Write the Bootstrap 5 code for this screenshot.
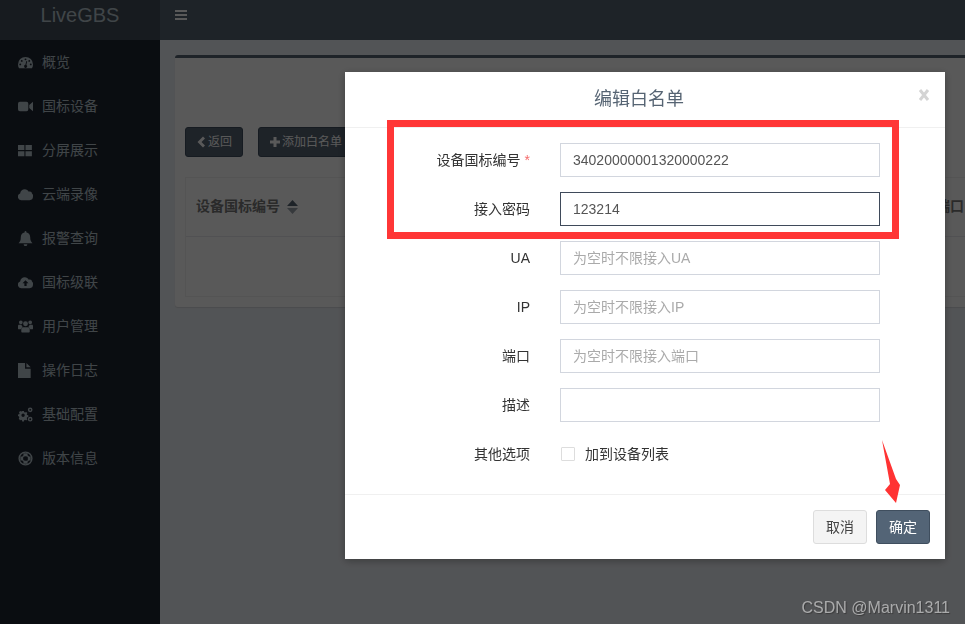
<!DOCTYPE html>
<html lang="zh"><head><meta charset="utf-8"><title>LiveGBS</title>
<link href="https://cdn.jsdelivr.net/npm/bootstrap@5.3.0/dist/css/bootstrap.min.css" rel="stylesheet">
<style>
html,body{height:100%;overflow:hidden}
body{font-family:"Liberation Sans","Noto Sans CJK SC",sans-serif;font-size:14px;background:#ecf0f5;color:#333}
.shell{height:624px}
.side{width:160px;flex:none;background:#1f2533;}
.logo{height:40px;background:#424e5b;color:#b8c7ce;font-size:20px;line-height:30px;text-align:center;}
.side-link{height:44px;padding-left:18px;color:#b8c7ce;gap:9px;text-decoration:none}
.side-link svg{width:15px;height:15px;flex:none;fill:currentColor}
.main-col{min-width:0;flex:1;overflow:hidden}
.topbar{height:40px;background:#566473;padding:8px 0 0 15px;color:#fff}
.topbar svg{width:12px;height:14px;fill:currentColor}
.panel{margin:15px 0 0 15px;width:900px;height:252px;background:#fff;border-top:3px solid #566473;border-radius:3px;padding:69px 10px 0 10px;box-shadow:0 1px 1px rgba(0,0,0,.1)}
.act{height:30px;background:#566473;border:1px solid #3f4e5e;color:#fff;font-size:12px;padding:0 10px;border-radius:3px;gap:2px;margin-right:15px}
.act-add{padding-left:11px}
.act svg{width:10px;height:12px;fill:currentColor}
.grid-box{margin-top:20px;border:1px solid #f0f0f0;height:120px;width:1000px}
.grid-head{height:59px;padding-bottom:1px;border-bottom:1px solid #e8e8ee;font-weight:700;color:#7a7a7a}
.cell-a{width:750px;padding-left:10px;gap:7px}
.sort-ico{width:11px;height:14px}
.dim{position:fixed;inset:0;background:rgba(0,0,0,.65);z-index:10}
.dlg{position:fixed;left:345px;top:72px;width:600px;height:487px;z-index:11;border:0;border-radius:0;background:#fff;box-shadow:0 2px 8px rgba(0,0,0,.3);color:#333}
.dlg .modal-header{height:56px;padding:0 15px;border-bottom:1px solid #f0f0f0;justify-content:center;position:relative}
.dlg-title{font-size:18px;color:#566473;font-weight:400;margin:0 12px 0 0}
.dlg-x{position:absolute;left:573px;top:16px;width:12px;height:14px;color:#d4d4d4}
.dlg .modal-body{padding:15px 0 0;flex:none;height:366px}
.frow{height:34px;margin-bottom:15px;gap:30px}
.flabel{width:185px;text-align:right;margin:0;color:#333}
.req{color:#f56c6c;margin-left:4px}
.finput{width:320px;height:34px;border:1px solid #d2d6de;border-radius:0;padding:6px 12px;font-size:14px;color:#555;font-family:inherit;box-shadow:none}
.finput::placeholder{color:#aaa}
.finput.on{border-color:#3f4a5a;box-shadow:none}
.chk{width:14px;height:14px;margin:0 10px 0 1px;border:1px solid #ddd;background:#fff;border-radius:1px;display:block;flex:none}
.chk-wrap{color:#333;margin:0}
.dlg .modal-footer{height:65px;padding:15px;border-top:1px solid #f0f0f0;gap:9px;flex-wrap:nowrap}
.dlg .modal-footer .btn{margin:0;width:54px;height:34px;padding:0;font-size:14px;border-radius:3px}
.btn-off{background:#f4f4f4;border:1px solid #ddd;color:#444}
.btn-ok{background:#536476;border:1px solid #3f4e5e;color:#fff}
.mark-rect{position:fixed;left:387px;top:120px;width:512px;height:119px;border:7px solid #ff3636;z-index:12}
.mark-arrow{position:fixed;left:875px;top:438px;width:30px;height:68px;z-index:12}
.stamp{position:fixed;right:15px;top:597px;color:#fff;opacity:.5;font-size:16px;line-height:22px;z-index:12;text-shadow:1px 1px 1px #222}
</style></head>
<body>
<div class="shell d-flex">
<aside class="side">
<div class="logo">LiveGBS</div>
<nav class="d-flex flex-column">
<a class="side-link d-flex align-items-center" href="#"><svg viewBox="0 0 16 16"><path fill-rule="evenodd" d="M8 2a8 8 0 0 0-8 8c0 1.500.4 2.900 1.100 4h13.800A8 8 0 0 0 16 10a8 8 0 0 0-8-8zM8 3.600a1 1 0 1 1 0 2 1 1 0 0 1 0-2zM4 5.300a1 1 0 1 1 0 2 1 1 0 0 1 0-2zM12 5.300a1 1 0 1 1 0 2 1 1 0 0 1 0-2zM2.400 9a1 1 0 1 1 0 2 1 1 0 0 1 0-2zM13.600 9a1 1 0 1 1 0 2 1 1 0 0 1 0-2zM8.900 6.500l.9.2-.9 4a1.600 1.600 0 1 1-1-.2z"/></svg>概览</a>
<a class="side-link d-flex align-items-center" href="#"><svg viewBox="0 0 16 16"><path d="M0 5a2 2 0 0 1 2-2h7a2 2 0 0 1 2 2v6a2 2 0 0 1-2 2H2a2 2 0 0 1-2-2zM12 6.500 16 3v10l-4-3.500z"/></svg>国标设备</a>
<a class="side-link d-flex align-items-center" href="#"><svg viewBox="0 0 16 16"><path d="M0 2h6.800v5.500H0zM8 2h6.800v5.500H8zM0 8.700h6.800v5.500H0zM8 8.700h6.800v5.500H8z"/></svg>分屏展示</a>
<a class="side-link d-flex align-items-center" href="#"><svg viewBox="0 0 16 16"><path d="M3.600 14A3.600 3.600 0 0 1 2.300 7C2.500 4.500 4.600 2.500 7.200 2.500c1.900 0 3.500 1 4.300 2.600 .4-.2.800-.3 1.200-.3 1.200 0 2.100.9 2.200 2A3.700 3.700 0 0 1 16 10.200 3.800 3.800 0 0 1 12.300 14z"/></svg>云端录像</a>
<a class="side-link d-flex align-items-center" href="#"><svg viewBox="0 0 16 16"><path d="M8 0a1 1 0 0 1 1 1v.6c2.500.4 4 2.400 4 4.900 0 3.500.8 5 2.400 6.500H.6C2.200 11.500 3 10 3 6.500 3 4 4.500 2 7 1.600V1a1 1 0 0 1 1-1zM6 14h4a2 2 0 0 1-4 0z"/></svg>报警查询</a>
<a class="side-link d-flex align-items-center" href="#"><svg viewBox="0 0 16 16"><path fill-rule="evenodd" d="M3.600 14A3.600 3.600 0 0 1 2.300 7C2.500 4.500 4.600 2.500 7.200 2.500c1.900 0 3.500 1 4.300 2.600 .4-.2.800-.3 1.200-.3 1.200 0 2.100.9 2.200 2A3.700 3.700 0 0 1 16 10.200 3.800 3.800 0 0 1 12.300 14zM8 5.500 4.800 8.800h2v3h2.400v-3h2z"/></svg>国标级联</a>
<a class="side-link d-flex align-items-center" href="#"><svg viewBox="0 0 16 16"><path d="M3 1.500a2 2 0 1 1 0 4 2 2 0 0 1 0-4zM13 1.500a2 2 0 1 1 0 4 2 2 0 0 1 0-4zM8 2.500a2.600 2.600 0 1 1 0 5.200 2.600 2.600 0 0 1 0-5.200zM0 7.500c0-.8.600-1.300 1.200-1.300h2.500c.1 1 .6 1.900 1.400 2.400-1 .4-1.900 1.300-2.100 2.400H1C.4 11 0 10.500 0 10zM16 7.500c0-.8-.6-1.300-1.200-1.300h-2.500c-.1 1-.6 1.900-1.400 2.400 1 .4 1.900 1.300 2.100 2.400H15c.6 0 1-.5 1-1zM5.500 8.800h5c1.200 0 2 .9 2 2.100v2.300c0 .6-.5 1.100-1.100 1.100H4.600c-.6 0-1.100-.5-1.100-1.100v-2.300c0-1.200.8-2.100 2-2.100z"/></svg>用户管理</a>
<a class="side-link d-flex align-items-center" href="#"><svg viewBox="0 0 16 16"><path d="M0 0h7.500v6H13.500v10H0zM9 0l4.500 4.500H9z"/></svg>操作日志</a>
<a class="side-link d-flex align-items-center" href="#"><svg viewBox="0 0 16 16"><path fill-rule="evenodd" d="M4.500 4.200h1.800l.3 1.300 1 .4 1.100-.7 1.300 1.300-.7 1.100.4 1 1.300.3v1.800l-1.300.3-.4 1 .7 1.100-1.300 1.300-1.100-.7-1 .4-.3 1.300H4.500l-.3-1.300-1-.4-1.100.7L.8 12.100l.7-1.100-.4-1L0 9.700V7.900l1.300-.3.4-1-.7-1.100 1.300-1.300 1.100.7 1-.4zM5.400 7a1.800 1.800 0 1 0 0 3.600 1.800 1.800 0 0 0 0-3.600zM13 .5a2.500 2.500 0 1 1 0 5 2.500 2.500 0 0 1 0-5zM13 2a1 1 0 1 0 0 2 1 1 0 0 0 0-2zM13 10.500a2.500 2.500 0 1 1 0 5 2.500 2.500 0 0 1 0-5zM13 12a1 1 0 1 0 0 2 1 1 0 0 0 0-2z"/></svg>基础配置</a>
<a class="side-link d-flex align-items-center" href="#"><svg viewBox="0 0 16 16"><circle cx="8" cy="8" r="6.800" fill="none" stroke="currentColor" stroke-width="1.500"/><circle cx="8" cy="8" r="3.400" fill="none" stroke="currentColor" stroke-width="1.200"/><path d="M5.500 2.500h5l-.8 3H6.300zM5.500 13.500h5l-.8-3H6.300zM2.500 5.500v5l3-.8V6.300zM13.500 5.500v5l-3-.8V6.300z"/></svg>版本信息</a>
</nav>
</aside>
<div class="main-col">
<div class="topbar"><svg class="d-block" viewBox="0 0 12 14"><path d="M0 2h12v2H0zM0 6h12v2H0zM0 10h12v2H0z"/></svg></div>
<section class="panel">
<div class="d-flex">
<button class="act d-inline-flex align-items-center" type="button"><svg viewBox="0 0 10 12"><path d="M7 .5 9 2.500 5.500 6 9 9.500 7 11.500 1.500 6z"/></svg>返回</button>
<button class="act act-add d-inline-flex align-items-center" type="button"><svg viewBox="0 0 10 12"><path d="M3.500 1h3v3.500H10v3H6.500V11h-3V7.500H0v-3h3.500z"/></svg>添加白名单</button>
</div>
<div class="grid-box">
<div class="grid-head d-flex align-items-center">
<div class="cell-a d-flex align-items-center">设备国标编号 <svg class="sort-ico" viewBox="0 0 11 14"><path fill="#566473" d="M5.500 0 11 6H0z"/><path fill="#9aa3ad" d="M5.500 14 0 8h11z"/></svg></div>
<div>端口</div>
</div>
</div>
</section>
</div>
</div>

<div class="dim"></div>
<div class="modal-content dlg">
<div class="modal-header">
<h4 class="dlg-title">编辑白名单</h4>
<svg class="dlg-x" viewBox="0 0 12 14"><path d="M2 2 10 12M10 2 2 12" stroke="currentColor" stroke-width="3" fill="none"/></svg>
</div>
<div class="modal-body">
<div class="frow d-flex align-items-center"><label class="flabel">设备国标编号<span class="req">*</span></label><input class="form-control finput" value="34020000001320000222"></div>
<div class="frow d-flex align-items-center"><label class="flabel">接入密码</label><input class="form-control finput on" value="123214"></div>
<div class="frow d-flex align-items-center"><label class="flabel">UA</label><input class="form-control finput" placeholder="为空时不限接入UA"></div>
<div class="frow d-flex align-items-center"><label class="flabel">IP</label><input class="form-control finput" placeholder="为空时不限接入IP"></div>
<div class="frow d-flex align-items-center"><label class="flabel">端口</label><input class="form-control finput" placeholder="为空时不限接入端口"></div>
<div class="frow d-flex align-items-center"><label class="flabel">描述</label><input class="form-control finput"></div>
<div class="frow d-flex align-items-center"><label class="flabel">其他选项</label><label class="chk-wrap d-flex align-items-center"><span class="chk"></span>加到设备列表</label></div>
</div>
<div class="modal-footer">
<button class="btn btn-off" type="button">取消</button>
<button class="btn btn-ok" type="button">确定</button>
</div>
</div>
<div class="mark-rect"></div>
<svg class="mark-arrow" viewBox="0 0 30 68"><path fill="#ff3333" d="M7 2 21 41 25 47 21 65 10 52 15 46z"/></svg>
<div class="stamp">CSDN @Marvin1311</div>
<script src="https://cdn.jsdelivr.net/npm/bootstrap@5.3.0/dist/js/bootstrap.bundle.min.js"></script>
</body></html>
